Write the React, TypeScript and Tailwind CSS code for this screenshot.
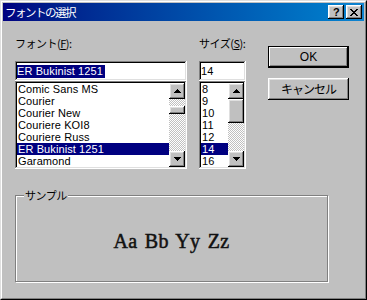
const raised =
  'shadow-[inset_-1px_-1px_#000,inset_1px_1px_#fff,inset_-2px_-2px_#808080,inset_2px_2px_#dfdfdf]';
const sunken =
  'shadow-[inset_-1px_-1px_#fff,inset_1px_1px_#808080,inset_-2px_-2px_#dfdfdf,inset_2px_2px_#000]';
const dither =
  'bg-[image:repeating-conic-gradient(#c0c0c0_0_25%,#fff_0_50%)] bg-[length:2px_2px]';

const fonts = ['Comic Sans MS', 'Courier', 'Courier New', 'Couriere KOI8', 'Couriere Russ', 'ER Bukinist 1251', 'Garamond'];
const sizes = ['8', '9', '10', '11', '12', '14', '16'];

function Arrow({ up }: { up?: boolean }) {
  const rows = up ? [1, 3, 5, 7] : [7, 5, 3, 1];
  return (
    <svg width="7" height="4" viewBox="0 0 7 4" shapeRendering="crispEdges">
      {rows.map((w, i) => (
        <rect key={i} x={(7 - w) / 2} y={i} width={w} height={1} fill="#000" />
      ))}
    </svg>
  );
}

function ScrollBar({ thumbTop, thumbHeight }: { thumbTop: number; thumbHeight: number }) {
  return (
    <div className={`w-[16px] h-full flex flex-col ${dither}`}>
      <div className={`h-[16px] bg-[#c0c0c0] ${raised} flex items-center justify-center`}>
        <Arrow up />
      </div>
      <div className="flex-1 flex flex-col">
        <div style={{ height: thumbTop }} />
        <div className={`bg-[#c0c0c0] ${raised}`} style={{ height: thumbHeight }} />
      </div>
      <div className={`h-[16px] bg-[#c0c0c0] ${raised} flex items-center justify-center`}>
        <Arrow />
      </div>
    </div>
  );
}

function ListBox({ items, selected, thumbTop, thumbHeight, width }: { items: string[]; selected: string; thumbTop: number; thumbHeight: number; width: string }) {
  return (
    <div className={`${width} h-[88px] bg-white p-[2px] ${sunken} flex`}>
      <div className="flex-1 flex flex-col">
        {items.map((it) => (
          <div
            key={it}
            className={`h-[12px] leading-[12px] pl-[1px] whitespace-nowrap ${it === selected ? 'bg-[#000080] text-white' : 'text-black'}`}
          >
            {it}
          </div>
        ))}
      </div>
      <ScrollBar thumbTop={thumbTop} thumbHeight={thumbHeight} />
    </div>
  );
}

function Label({ text, accel }: { text: string; accel: string }) {
  return (
    <div className="h-[14px] leading-[14px] text-[11px] text-black font-['Noto_Sans_CJK_JP',sans-serif] tracking-[-0.5px]">
      {text}(<span className="underline">{accel}</span>):
    </div>
  );
}

export default function App() {
  return (
    <div className="w-[367px] h-[300px] bg-[#c0c0c0] border border-t-[#dfdfdf] border-l-[#dfdfdf] border-r-black border-b-black font-['Liberation_Sans',sans-serif] text-[11px] tracking-[0.1px]">
      <div className="h-full border border-t-white border-l-white border-r-[#808080] border-b-[#808080] p-px flex flex-col">
        {/* title bar */}
        <div className="h-[18px] bg-gradient-to-r from-[#000080] to-[#1084d0] flex items-center pl-[2px] pr-[2px]">
          <span className="flex-1 text-white text-[11.5px] leading-[18px] font-['Noto_Sans_CJK_JP',sans-serif] tracking-[-1.5px]">
            フォントの選択
          </span>
          <div className="flex gap-[2px]">
            <div className={`w-[16px] h-[14px] bg-[#c0c0c0] ${raised} flex items-center justify-center`}>
              <span className="text-[11px] leading-none font-bold text-black pl-px">?</span>
            </div>
            <div className={`w-[16px] h-[14px] bg-[#c0c0c0] ${raised} flex items-center justify-center`}>
              <svg width="8" height="7" viewBox="0 0 8 7" shapeRendering="crispEdges">
                <path d="M0 0h2v1h1v1h2V1h1V0h2v1H7v1H6v1H5v1h1v1h1v1h1v1H6V6H5V5H3v1H2v1H0V6h1V5h1V4h1V3H2V2H1V1H0z" fill="#000" />
              </svg>
            </div>
          </div>
        </div>

        {/* body */}
        <div className="pl-[12px] pt-[15px]">
          <div className="flex items-start">
            <div className="w-[172px]">
              <Label text="フォント" accel="F" />
              <div className={`mt-[11px] h-[20px] bg-white px-[2px] pt-[2px] ${sunken}`}>
                <span className="bg-[#000080] text-white leading-[13px] inline-block h-[13px] pr-[2px]">ER Bukinist 1251</span>
              </div>
              <ListBox items={fonts} selected="ER Bukinist 1251" thumbTop={7} thumbHeight={8} width="w-[172px]" />
            </div>

            <div className="w-[47px] ml-[12px]">
              <Label text="サイズ" accel="S" />
              <div className={`mt-[11px] h-[20px] bg-white px-[2px] pt-[2px] ${sunken}`}>
                <span className="leading-[13px] inline-block h-[13px]">14</span>
              </div>
              <ListBox items={sizes} selected="14" thumbTop={0} thumbHeight={24} width="w-[47px]" />
            </div>

            <div className="w-[81px] ml-[22px] flex flex-col gap-[10px] mt-[10px]">
              <button className="h-[22px] border border-black bg-[#c0c0c0] shadow-[inset_-1px_-1px_#000,inset_1px_1px_#fff,inset_-2px_-2px_#808080] text-black text-[12px] tracking-normal">
                OK
              </button>
              <button className={`h-[22px] bg-[#c0c0c0] ${raised} text-black text-[12px] font-['Noto_Sans_CJK_JP',sans-serif] tracking-[-1px]`}>
                キャンセル
              </button>
            </div>
          </div>

          {/* sample group */}
          <div className="relative mt-[26px] w-[313px] h-[87px] border border-[#808080] shadow-[inset_1px_1px_#fff,1px_1px_#fff] flex items-center justify-center">
            <span className="absolute left-[8px] top-[-8px] px-[1px] bg-[#c0c0c0] text-[11px] leading-[14px] font-['Noto_Sans_CJK_JP',sans-serif] tracking-[-0.5px]">
              サンプル
            </span>
            <span className="font-['Liberation_Serif',serif] text-[20px] text-[#111] tracking-[0.3px] [word-spacing:2px] [-webkit-text-stroke:0.5px_#111] mt-[4px]">
              Aa Bb Yy Zz
            </span>
          </div>
        </div>
      </div>
    </div>
  );
}
